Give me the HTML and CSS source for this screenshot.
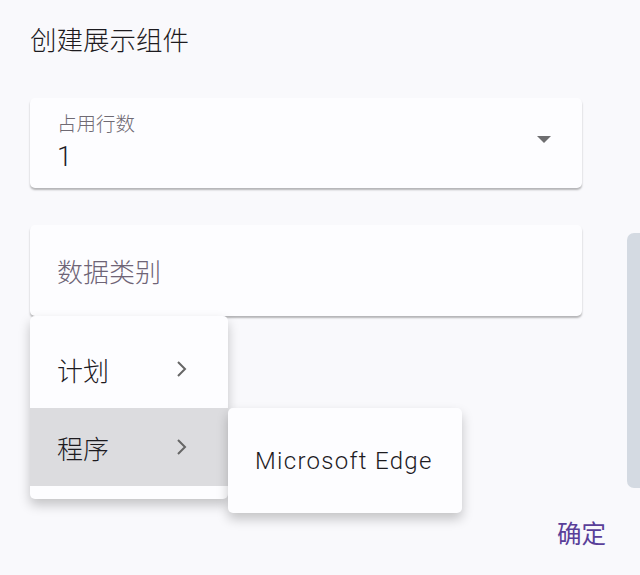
FILE: index.html
```html
<!DOCTYPE html>
<html>
<head>
	<meta charset="utf-8">
	<title>创建展示组件</title>
	<link rel="stylesheet" href="styles.css">
</head>
<body>
	<div class="dialog">
		<h1 class="title">创建展示组件</h1>

		<div class="field select">
			<div class="field-text">
				<span class="field-label">占用行数</span>
				<span class="field-value">1</span>
			</div>
			<span class="caret"></span>
		</div>

		<div class="field">
			<span class="placeholder">数据类别</span>
		</div>

		<div class="actions">
			<button class="btn-text">确定</button>
		</div>

		<!-- kaskadni meni -->
		<ul class="menu">
			<li class="menu-item">计划
				<svg class="chev" viewBox="0 0 12 18" width="12" height="18"><path d="M2 2 L9 9 L2 16" fill="none" stroke="#666" stroke-width="2"/></svg>
			</li>
			<li class="menu-item active">程序
				<svg class="chev" viewBox="0 0 12 18" width="12" height="18"><path d="M2 2 L9 9 L2 16" fill="none" stroke="#666" stroke-width="2"/></svg>
			</li>
		</ul>
		<ul class="menu submenu">
			<li class="menu-item">Microsoft Edge</li>
		</ul>

		<div class="scrollbar"></div>
	</div>
</body>
</html>
```

FILE: styles.css
```css
body {
	margin: 0;
	padding: 0;
	background-color: #f9f9fc;
	font-family: Roboto, "Noto Sans CJK SC", sans-serif;
	color: #1d1b1f;
}

.dialog {
	position: relative;
	height: 575px;
	padding: 0 58px 0 30px;
	box-sizing: border-box;
}

.title {
	margin: 0;
	padding-top: 24px;
	font-size: 26.5px;
	font-weight: 300;
	line-height: 34px;
}

.field {
	display: flex;
	align-items: center;
	height: 91px;
	margin-top: 37px;
	padding: 0 27px;
	background-color: #fdfdff;
	border-radius: 5px;
	box-shadow: 0 2px 2px rgba(0, 0, 0, 0.28);
	box-sizing: border-box;
}

.select {
	height: 90px;
	margin-top: 40px;
	justify-content: space-between;
	padding-right: 31px;
}

.field-text {
	display: flex;
	flex-direction: column;
	padding-top: 2px;
}

.field-label {
	font-size: 19.5px;
	font-weight: 300;
	line-height: 26px;
	color: #6f6a73;
}

.field-value {
	font-size: 27px;
	font-weight: 300;
	line-height: 38px;
}

.caret {
	width: 0;
	height: 0;
	margin-top: -8px;
	border-left: 7px solid transparent;
	border-right: 7px solid transparent;
	border-top: 7px solid #6e6e70;
}

.placeholder {
	font-size: 26px;
	font-weight: 300;
	color: #6e6476;
}

.actions {
	margin-top: 204px;
	margin-right: -24px;
	text-align: right;
}

.btn-text {
	border: none;
	background: none;
	padding: 0;
	font-family: inherit;
	font-size: 24.5px;
	line-height: 30px;
	color: #5a3f99;
}

.menu {
	position: absolute;
	left: 30px;
	top: 316px;
	width: 198px;
	margin: 0;
	padding: 14px 0 13px;
	list-style: none;
	background-color: #fdfdff;
	border-radius: 5px;
	box-shadow: 0 6px 12px rgba(0, 0, 0, 0.22);
}

.menu-item {
	display: flex;
	align-items: center;
	justify-content: space-between;
	height: 78px;
	padding: 0 40px 0 27px;
	font-size: 26px;
	font-weight: 300;
}

.menu-item.active {
	background-color: #dcdcdf;
}

.submenu {
	left: 228px;
	top: 408px;
	width: 234px;
	padding: 0;
}

.submenu .menu-item {
	height: 105px;
	padding: 0 0 0 27px;
	font-size: 24px;
	font-weight: 300;
	letter-spacing: 1.3px;
	white-space: nowrap;
}

.scrollbar {
	position: absolute;
	right: 0;
	top: 233px;
	width: 13px;
	height: 255px;
	background-color: #d4dae2;
	border-radius: 7px 0 0 7px;
}
```
